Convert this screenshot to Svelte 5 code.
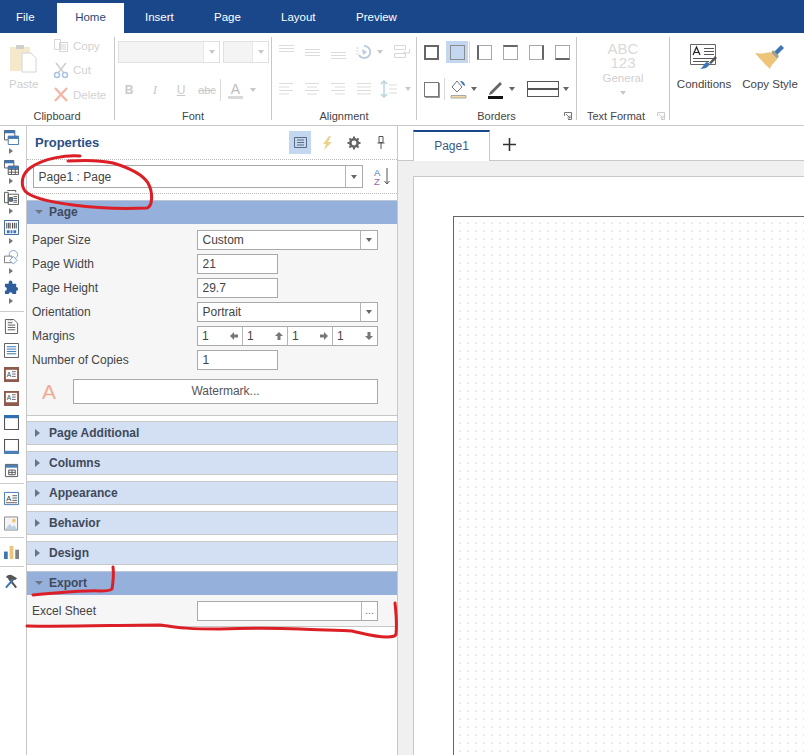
<script>
  const tabs = ['File', 'Home', 'Insert', 'Page', 'Layout', 'Preview'];
  const rows = [
    { label: 'Paper Size', kind: 'select', value: 'Custom' },
    { label: 'Page Width', kind: 'input', value: '21' },
    { label: 'Page Height', kind: 'input', value: '29.7' },
    { label: 'Orientation', kind: 'select', value: 'Portrait' },
    { label: 'Margins', kind: 'margins' },
    { label: 'Number of Copies', kind: 'input', value: '1' }
  ];
  const collapsed = ['Page Additional', 'Columns', 'Appearance', 'Behavior', 'Design'];
  const marginIcons = [
    'M0 4 4 0v2.500h4v3H4V8z',
    'M4 0l4 4H5.500v4h-3V4H0z',
    'M8 4 4 0v2.500H0v3h4V8z',
    'M4 8 0 4h2.500V0h3v4H8z'
  ];
  const alignTop = [
    'M0 6.500h15M0 9.500h15M0 12.500h15',
    'M0 10.500h15M0 13.500h15M0 16.500h15',
    'M0 13.500h15M0 16.500h15M0 19.500h15'
  ];
  const alignBottom = [
    'M1 1.500h14M1 5h10M1 8.500h14M1 12h10',
    'M1 1.500h14M3 5h10M1 8.500h14M3 12h10',
    'M1 1.500h14M5 5h10M1 8.500h14M5 12h10',
    'M1 1.500h14M1 5h14M1 8.500h14M1 12h14'
  ];
</script>

<div class="app">
  <header class="tabbar">
    {#each tabs as tab}
      <div class="tab" class:active={tab === 'Home'}>{tab}</div>
    {/each}
  </header>

  <section class="ribbon">
    <div class="group clipboard">
      <div class="group-body clip-body">
        <div class="big dis">
          <svg width="28" height="30" viewBox="0 0 28 30"><path d="M1 3h20v24H1z" fill="#f5e9cc"/><path d="M7 1h8v4H7z" fill="#cfcfcf"/><path d="M13 9h9l5 5v14H13z" fill="#fff" stroke="#d4d4d4"/></svg>
          <span>Paste</span>
        </div>
        <div class="smalls dis">
          <div class="small"><svg width="16" height="15" viewBox="0 0 16 15" fill="none" stroke="#d6d6d6"><path d="M1.500 1.500h6v10h-6zM6.500 4.500h8v9h-8zM8 7h5M8 9h5M8 11h5"/></svg><span>Copy</span></div>
          <div class="small"><svg width="16" height="17" viewBox="0 0 16 17" fill="none"><path d="M3 1l8 10M13 1 5 11" stroke="#cdcdcd" stroke-width="1.500"/><circle cx="4" cy="13" r="2.500" stroke="#a9c3e6" stroke-width="1.500"/><circle cx="12" cy="13" r="2.500" stroke="#a9c3e6" stroke-width="1.500"/></svg><span>Cut</span></div>
          <div class="small"><svg width="16" height="15" viewBox="0 0 16 15" fill="none"><path d="M2 1l12 13M14 1 2 14" stroke="#f3b5a6" stroke-width="2.200"/></svg><span>Delete</span></div>
        </div>
      </div>
      <div class="group-label">Clipboard</div>
    </div>

    <div class="group font">
      <div class="group-body font-body">
        <div class="combos">
          <div class="combo c1"><i></i><b class="drop"><em class="tri"></em></b></div>
          <div class="combo c2"><i></i><b class="drop"><em class="tri"></em></b></div>
        </div>
        <div class="font-btns">
          <span class="f fb">B</span><span class="f fi">I</span><span class="f fu">U</span><span class="f fs">abc</span>
          <span class="vsep"></span>
          <span class="fa">A</span><em class="tri"></em>
        </div>
      </div>
      <div class="group-label">Font</div>
    </div>

    <div class="group alignment">
      <div class="group-body align-rows">
        <div class="a-row">
          {#each alignTop as d}
            <span class="a-cell"><svg width="15" height="20" viewBox="0 0 15 20" stroke="#dcdcdc"><path {d}/></svg></span>
          {/each}
          <span class="rot low"><svg width="18" height="18" viewBox="0 0 18 18" fill="none"><path d="M9 3a6 6 0 1 1-5 9" stroke="#bccbdd" stroke-width="2"/><path d="M7 6l5 3-4 3z" fill="#bccbdd"/><path d="M1 5h3M1 8h3M1 11h3" stroke="#ddd"/></svg><em class="tri"></em></span>
          <svg class="wrap" width="16" height="16" viewBox="0 0 16 16" fill="none" stroke="#d8d8d8"><path d="M.5 1.500h11v4H.5zM.5 9.500h11v4H.5zM15.500 5v4h-6M11.500 7l-2 2 2 2"/></svg>
        </div>
        <div class="a-row">
          {#each alignBottom as d}
            <span class="a-cell"><svg width="16" height="14" viewBox="0 0 16 14" stroke="#dcdcdc"><path {d}/></svg></span>
          {/each}
          <span class="rot spacing"><svg width="18" height="18" viewBox="0 0 18 18" fill="none"><path d="M4 1v16" stroke="#b7d5e3" stroke-width="1.500"/><path d="M1 4l3-3 3 3M1 14l3 3 3-3" stroke="#b7d5e3" stroke-width="1.500"/><path d="M9 5h8M9 9h8M9 13h8" stroke="#dcdcdc"/></svg><em class="tri"></em></span>
        </div>
      </div>
      <div class="group-label">Alignment</div>
    </div>

    <div class="group borders">
      <div class="group-body borders-body">
        <div class="b-row r1">
          <span class="bb"><i class="box all"></i></span>
          <span class="bb on"><i class="box none"></i></span>
          <span class="vsep tall"></span>
          <span class="bb"><i class="box l"></i></span>
          <span class="bb"><i class="box t"></i></span>
          <span class="bb"><i class="box r"></i></span>
          <span class="bb"><i class="box bt"></i></span>
        </div>
        <div class="b-row r2">
          <span class="bb"><i class="box shadow"></i></span>
          <span class="vsep tall"></span>
          <svg class="fill" width="18" height="19" viewBox="0 0 18 19" fill="none"><path d="M7 1l5 6-5 5-5-5z" stroke="#777"/><path d="M10 1c3 0 5 2 5 5l-2-1z" fill="#3d77b8"/><path d="M1 15.500h15v2.500H1z" fill="#f0d9a3" stroke="#aaa"/></svg>
          <em class="tri dk"></em>
          <svg class="pen" width="18" height="19" viewBox="0 0 18 19" fill="none"><path d="M3 12 13 2l2 2L5 14l-3 1z" fill="#666"/><path d="M1 16h15v3H1z" fill="#111"/></svg>
          <em class="tri dk"></em>
          <span class="lines"></span>
          <em class="tri dk"></em>
        </div>
      </div>
      <div class="group-label">Borders</div>
      <svg class="launcher" width="8" height="8" viewBox="0 0 8 8" fill="none" stroke="#777"><path d="M.5 4V.5H7.500V7.500H4M2 2l4 4M3.500 6H6V3.500"/></svg>
    </div>

    <div class="group format">
      <div class="group-body fmt">
        <span class="abc">ABC</span>
        <span class="abc">123</span>
        <span class="gen">General</span>
        <em class="tri"></em>
      </div>
      <div class="group-label tight">Text Format</div>
      <svg class="launcher" width="8" height="8" viewBox="0 0 8 8" fill="none" stroke="#ccc"><path d="M.5 4V.5H7.500V7.500H4M2 2l4 4M3.500 6H6V3.500"/></svg>
    </div>

    <div class="tools">
      <div class="tool">
        <svg width="28" height="26" viewBox="0 0 28 26" fill="none"><path d="M.5.500h25v20H.5z" fill="#fff" stroke="#666"/><path d="M14 4.500h10M14 7.500h10M14 10.500h10M3 14.500h21M3 17.500h16" stroke="#555"/><path d="M3 11 6.500 3 10 11M4.500 8.500h4" stroke="#222" stroke-width="1.200"/><path d="M27 14 21 20l-2-1 6-7z" fill="#555"/><path d="M19 19c1 3-3 6-9 6 3-1 3-5 7-7z" fill="#3d77b8"/></svg>
        <span>Conditions</span>
      </div>
      <div class="tool">
        <svg width="32" height="26" viewBox="0 0 32 26"><path d="M27 1l3 3-7 7-3-3z" fill="#3d77b8"/><path d="M19 6l6 6-2 3-6-6z" fill="#a9a18c"/><path d="M1 9c6 1 12 0 15-1l7 7c-2 3-6 6-7 10C10 19 5 14 1 9z" fill="#eec37a"/></svg>
        <span>Copy Style</span>
      </div>
    </div>
  </section>

  <main class="body">
    <nav class="rail">
      <div class="tb"><svg viewBox="0 0 16 16"><path d="M.5.500h11v10H.5z" fill="#fff" stroke="#555"/><path d="M.5.500h11v3H.5z" fill="#3e76b4"/><path d="M4.500 6.500h11v9h-11z" fill="#fff" stroke="#3e76b4"/><path d="M4.500 6.500h11v3h-11z" fill="#3e76b4"/></svg></div><i class="ar"></i>
      <div class="tb"><svg viewBox="0 0 16 16" fill="none"><path d="M.5.500h10v8H.5z" fill="#fff" stroke="#555"/><path d="M.5.500h10v3H.5z" fill="#3e76b4"/><path d="M4.500 6.500h11v9h-11zM4.500 10h11M4.500 13h11M8 6.500v9M12 6.500v9" fill="#fff" stroke="#555"/><path d="M4.500 6.500h11v3h-11z" fill="#3e76b4"/></svg></div><i class="ar"></i>
      <div class="tb"><svg viewBox="0 0 16 16" fill="none" stroke="#555"><path d="M.5 2.500h4v11h-4zM3.500.500h9v2M4.500 4.500h11v11h-11zM10 7h4M10 9h4M10 11h4M10 13h4"/><path d="M6 8h3v4H6z" fill="#3e76b4"/></svg></div><i class="ar"></i>
      <div class="tb"><svg viewBox="0 0 16 16" fill="none"><path d="M.5.500h15v15H.5z" stroke="#2f5f97"/><path d="M3 3v6M5 3v6M6.500 3v6M9 3v6M11 3v6M13 3v6" stroke="#333"/><path d="M3 11h3v3H3zM7 11h2v3H7zM10 11h3v3h-3z" fill="#3e76b4"/></svg></div><i class="ar"></i>
      <div class="tb"><svg viewBox="0 0 16 16" fill="none"><circle cx="10" cy="5" r="4.500" stroke="#7fa3cc"/><path d="M.5 6.500h8v7h-8z" fill="#fff" stroke="#777"/><path d="M10 7l4 4-4 4-4-4z" fill="#fff" stroke="#7fa3cc"/></svg></div><i class="ar"></i>
      <div class="tb"><svg viewBox="0 0 16 16"><path d="M1 4h4V2.500a2 2 0 0 1 4 0V4h4v3.500a2 2 0 0 1 0 4V15H9a2 2 0 0 0-4 0H1v-3.500a2 2 0 0 0 0-4z" fill="#2e5f9c"/></svg></div><i class="ar"></i>
      <hr class="first" />
      <div class="tc"><svg viewBox="0 0 16 16" fill="none" stroke="#555"><path d="M1.500.500h9l4 4v11h-13zM4 4h5M4 6.500h8M4 9h8M4 11.500h8"/><path d="M4 2h6" stroke="#999" stroke-dasharray="1 1"/></svg></div>
      <div class="tc"><svg viewBox="0 0 16 16" fill="none"><path d="M.5.500h15v15H.5z" stroke="#555"/><path d="M3 4h10M3 6.500h10M3 9h10M3 11.500h10" stroke="#2f6eaf"/></svg></div>
      <div class="tc"><svg viewBox="0 0 16 16"><path d="M0 0h16v16H0z" fill="#8d5a4b"/><path d="M2 3h12v10H2z" fill="#fff"/><path d="M8.500 5h4M8.500 7.500h4M8.500 10h4" stroke="#666"/><text x="3" y="11" font-size="7" fill="#444" font-family="Liberation Sans">A</text></svg></div>
      <div class="tc"><svg viewBox="0 0 16 16"><path d="M0 0h16v16H0z" fill="#8d5a4b"/><path d="M2 2h12v10H2z" fill="#fff"/><path d="M8.500 4h4M8.500 6.500h4M8.500 9h4" stroke="#666"/><text x="3" y="10" font-size="7" fill="#444" font-family="Liberation Sans">A</text></svg></div>
      <div class="tc"><svg viewBox="0 0 14 14"><path d="M.5.500h13v13H.5z" fill="#fff" stroke="#555"/><path d="M0 0h14v3H0z" fill="#2f6eaf"/></svg></div>
      <div class="tc"><svg viewBox="0 0 14 14"><path d="M.5.500h13v13H.5z" fill="#fff" stroke="#555"/><path d="M0 11h14v3H0z" fill="#4b7fb7"/></svg></div>
      <div class="tc"><svg viewBox="0 0 14 16" fill="none"><path d="M.5 1.500h13v13H.5z" fill="#fff" stroke="#555"/><path d="M1 2h13v3H1z" fill="#4b7fb7"/><path d="M4 7.500h7v5H4zM4 10h7M7.500 7.500v5" stroke="#555"/></svg></div>
      <hr />
      <div class="td"><svg viewBox="0 0 16 14"><path d="M.5.500h15v13H.5z" fill="#fff" stroke="#3e76b4"/><path d="M9 4h5M9 6.500h5M9 9h5M2 11.500h12" stroke="#555"/><text x="2.500" y="9.500" font-size="8" fill="#333" font-family="Liberation Sans">A</text></svg></div>
      <div class="td"><svg viewBox="0 0 16 15"><path d="M.5.500h14v14H.5z" fill="#f4f4f4" stroke="#888"/><circle cx="10.500" cy="4.500" r="2" fill="#eec37a"/><path d="M1 14l5-6 3 3 2-2 3 5z" fill="#bcd0e6"/></svg></div>
      <hr />
      <div class="td"><svg viewBox="0 0 16 14"><path d="M0 6h4v8H0z" fill="#3e76b4"/><path d="M6 0h4v14H6z" fill="#eec37a"/><path d="M12 4h4v10h-4z" fill="#808080"/></svg></div>
      <hr />
      <div class="td"><svg viewBox="0 0 16 15" fill="none"><path d="M13 14 5 4" stroke="#555" stroke-width="2.200"/><path d="M2 14l9-10" stroke="#3e76b4" stroke-width="2.200"/><path d="M2 3c2-3 5-3 7-2l5 3-2 2-2-1-2 1z" fill="#555"/></svg></div>
    </nav>

    <aside class="panel">
      <div class="p-head">
        <h2>Properties</h2>
        <div class="p-icons">
          <span class="pi on"><svg width="13" height="11" viewBox="0 0 13 11" fill="none" stroke="#5a6b80"><path d="M.5.500h12v10H.5zM3 3h7M3 5.500h7M3 8h7"/></svg></span>
          <span class="pi"><svg width="11" height="14" viewBox="0 0 11 14"><path d="M7 0 1 8h3l-2 6 8-8H6l3-6z" fill="#eed18c"/></svg></span>
          <span class="pi"><svg width="14" height="14" viewBox="0 0 14 14" fill="none"><circle cx="7" cy="7" r="3.700" stroke="#666" stroke-width="2.600"/><path d="M7 .5v13M.5 7h13M2.400 2.400l9.200 9.200M11.600 2.400l-9.200 9.200" stroke="#666" stroke-width="2" stroke-dasharray="2.200 8.600"/></svg></span>
          <span class="pi"><svg width="8" height="13" viewBox="0 0 8 13" fill="none" stroke="#555"><path d="M2 .5h4v6H2zM.5 7h7M4 7v6"/></svg></span>
        </div>
      </div>
      <div class="p-select">
        <div class="field sel"><span>Page1 : Page</span><b class="drop"><em class="tri dk"></em></b></div>
        <div class="sort">
          <span class="az"><i>A</i><i>Z</i></span>
          <svg width="6" height="17" viewBox="0 0 6 17" fill="none"><path d="M3 0v16M.5 13l2.500 3 2.500-3" stroke="#555"/></svg>
        </div>
      </div>

      <div class="sec-head open first"><em class="caret down"></em>Page</div>
      <div class="sec-body">
        {#each rows as row}
          <div class="row">
            <label>{row.label}</label>
            {#if row.kind === 'select'}
              <div class="field wide"><span>{row.value}</span><b class="drop"><em class="tri dk"></em></b></div>
            {:else if row.kind === 'input'}
              <div class="field narrow"><span>{row.value}</span></div>
            {:else}
              <div class="field wide marg">
                {#each marginIcons as d}
                  <div class="m"><span>1</span><svg width="8" height="8" viewBox="0 0 8 8"><path {d} fill="#777"/></svg></div>
                {/each}
              </div>
            {/if}
          </div>
        {/each}
        <div class="wm">
          <span class="bigA">A</span>
          <div class="wm-btn">Watermark...</div>
        </div>
      </div>

      {#each collapsed as name}
        <div class="sec-head"><em class="caret"></em>{name}</div>
      {/each}

      <div class="sec-head open"><em class="caret down"></em>Export</div>
      <div class="sec-body export">
        <div class="row">
          <label>Excel Sheet</label>
          <div class="field wide"><span></span><b class="drop dots">...</b></div>
        </div>
      </div>
    </aside>

    <section class="designer">
      <div class="d-tabs">
        <div class="d-tab">Page1</div>
        <svg class="plus" width="13" height="13" viewBox="0 0 13 13"><path d="M6.500 0v13M0 6.500h13" stroke="#333" stroke-width="1.600"/></svg>
      </div>
      <div class="d-area">
        <div class="sheet"><div class="printable"></div></div>
      </div>
    </section>
  </main>

  <svg class="ink" width="804" height="755" viewBox="0 0 804 755" fill="none" stroke="#dc1f26" stroke-width="3" stroke-linecap="round" stroke-linejoin="round">
    <path d="M80 156C66 155 44 158 30 168C22 174 20 184 25 191C31 198 50 202 73 205C95 208 125 209 147 208C153 206 153 192 148 183C143 175 133 169 113 163C100 160 84 160 68 161"/>
    <path d="M113 567C114 575 113 583 112 589C110 591 106 591 100 591C85 590 70 592 33 595"/>
    <path d="M27 626C70 627 120 625 160 625C180 628 190 629 220 629C250 628 275 628 300 629C320 630 340 630 352 631C365 634 375 637 387 637C392 637 396 636 396 634C397 625 396 612 395 603"/>
  </svg>
</div>

<style>
  :global(body) { margin: 0; background: #fff; }
  .app {
    position: relative; width: 804px; height: 755px; overflow: hidden;
    font-family: "Liberation Sans", Arial, sans-serif; font-size: 12px; color: #444;
    display: flex; flex-direction: column; background: #fff;
  }
  .tabbar { height: 33px; background: #19478a; display: flex; align-items: flex-end; flex: none; }
  .tab { color: #fff; height: 30px; line-height: 29px; font-size: 11.500px; box-sizing: border-box; flex: none; }
  .tab:nth-child(1) { width: 57px; padding-left: 16px; }
  .tab:nth-child(2) { width: 67px; text-align: center; }
  .tab:nth-child(3) { width: 90px; padding-left: 21px; }
  .tab:nth-child(4) { width: 67px; }
  .tab:nth-child(5) { width: 75px; }
  .tab.active { background: #fff; color: #2a4a78; }

  .ribbon { height: 92px; display: flex; flex: none; border-bottom: 1px solid #c8c8c8; box-sizing: content-box; }
  .group { position: relative; display: flex; flex-direction: column; border-right: 1px solid #c8c8c8; margin: 4px 0 5px; box-sizing: border-box; height: 83px; flex: none; }
  .group-body { flex: none; height: 72px; position: relative; }
  .group-label { height: 14px; line-height: 14px; text-align: center; color: #444; flex: none; font-size: 11px; }
  .group-label.tight { padding-right: 14px; }
  .clipboard { width: 115px; }
  .font { width: 157px; }
  .alignment { width: 145px; }
  .borders { width: 160px; }
  .format { width: 93px; }
  .launcher { position: absolute; right: 4px; bottom: 0; }
  .clip-body { display: flex; padding-left: 9px; color: #ccc; box-sizing: border-box; font-size: 11.500px; }
  .big { width: 44px; display: flex; flex-direction: column; align-items: flex-start; gap: 4px; padding-top: 7px; }
  .big span { color: #cfcfcf; }
  .smalls { display: flex; flex-direction: column; gap: 7.500px; }
  .small { display: flex; align-items: center; gap: 4px; height: 17px; color: #d2d2d2; }
  .small svg { width: 16px; }

  .tri { display: inline-block; width: 0; height: 0; border: 3px solid transparent; border-top: 4px solid #c8c8c8; border-bottom: 0; flex: none; }
  .tri.dk { border-top-color: #666; }
  .font-body { padding: 4px 0 0 3px; box-sizing: border-box; }
  .combos { display: flex; gap: 3px; }
  .combo { height: 22px; border: 1px solid #e0e0e0; display: flex; box-sizing: border-box; }
  .combo i { flex: 1; background: #f4f4f4; }
  .c1 { width: 102px; }
  .c2 { width: 46px; }
  .combo .drop { width: 15px; border-left: 1px solid #e8e8e8; display: flex; align-items: center; justify-content: center; }
  .font-btns { display: flex; align-items: center; height: 24px; margin-top: 15px; position: relative; color: #ccc; }
  .f { width: 26px; text-align: center; color: #cacaca; font-size: 12px; }
  .fb { font-weight: bold; margin-left: -2px; }
  .fi { font-style: italic; font-family: "Liberation Serif", serif; font-size: 13px; }
  .fu { text-decoration: underline; }
  .fs { text-decoration: line-through; font-size: 11px; }
  .vsep { width: 1px; height: 22px; background: #d8d8d8; flex: none; }
  .fa { margin-left: 7px; margin-right: 7px; border-bottom: 3px solid #d9d9d9; font-size: 14px; color: #bdbdbd; width: 15px; text-align: center; line-height: 14px; }

  .align-rows { display: flex; flex-direction: column; gap: 20px; padding: 2px 0 0 1px; box-sizing: border-box; }
  .a-row { display: flex; align-items: center; height: 20px; }
  .a-cell { width: 26px; display: flex; justify-content: center; flex: none; }
  .rot { display: flex; align-items: center; gap: 4px; width: 36px; padding-left: 4px; box-sizing: border-box; flex: none; }
  .rot.low { margin-top: 6px; }
  .rot.spacing { gap: 7px; width: auto; padding-left: 3px; }
  .wrap { margin: 6px 0 0 7px; flex: none; }

  .borders-body { padding-top: 4px; box-sizing: border-box; }
  .b-row { display: flex; align-items: center; height: 22px; }
  .r1 { padding-left: 3px; }
  .r2 { margin-top: 15px; padding-left: 3px; }
  .bb { width: 22px; height: 22px; display: flex; align-items: center; justify-content: center; margin-right: 4px; flex: none; }
  .r1 .bb.on { margin-right: 1px; background: #c4d7f0; }
  .r1 .vsep { margin-right: 3px; }
  .box { display: block; width: 13px; height: 13px; border: 1px solid #a8a8a8; }
  .box.all { border: 2px solid #666; width: 11px; height: 11px; }
  .box.none { border-color: #8c8c8c; }
  .box.l { border-left: 2px solid #666; width: 12px; }
  .box.t { border-top: 2px solid #666; height: 12px; }
  .box.r { border-right: 2px solid #666; width: 12px; }
  .box.bt { border-bottom: 2px solid #666; height: 12px; }
  .box.shadow { border-color: #777; box-shadow: 1px 1px 0 #999; }
  .r2 .bb { margin-right: 2px; }
  .r2 .vsep { height: 22px; margin-right: 5px; }
  .fill { margin-right: 3px; }
  .pen { margin: 0 4px 0 10px; }
  .lines { width: 30px; height: 14px; margin: 0 4px 0 12px; border: 1px solid #555; background: linear-gradient(#fff 6px, #555 6px, #555 8px, #fff 8px); flex: none; }

  .fmt { display: flex; flex-direction: column; align-items: center; padding-top: 3px; box-sizing: border-box; color: #d9d9d9; }
  .abc { font-size: 15px; line-height: 17px; height: 14px; color: #d9d9d9; }
  .gen { margin-top: 3px; line-height: 14px; font-size: 11.500px; color: #d0d0d0; }
  .fmt .tri { margin-top: 6px; }

  .tools { display: flex; padding-top: 11px; }
  .tool { display: flex; flex-direction: column; align-items: center; gap: 8px; width: 68px; color: #444; font-size: 11.500px; }
  .tool:last-child { width: 64px; }

  .body { flex: 1; display: flex; min-height: 0; }
  .rail { width: 22px; padding-right: 4px; flex: none; border-right: 1px solid #c8c8c8; display: flex; flex-direction: column; align-items: center; padding-top: 3px; box-sizing: content-box; }
  .rail svg { width: 15px; height: 15px; display: block; }
  .tb { height: 17px; flex: none; display: flex; align-items: center; justify-content: center; }
  .ar { display: block; width: 0; height: 0; border: 3px solid transparent; border-left: 4px solid #777; border-right: 0; margin: 2px 0 5px; flex: none; }
  .rail hr { width: 24px; border: 0; border-top: 1px solid #ccc; margin: 1px 0 2px 2px; flex: none; }
  .rail hr.first { margin-top: 2px; }
  .tc { height: 24px; display: flex; align-items: center; justify-content: center; flex: none; }
  .td { height: 25px; display: flex; align-items: center; justify-content: center; flex: none; }

  .panel { width: 370px; flex: none; border-right: 1px solid #c8c8c8; display: flex; flex-direction: column; }
  .p-head { height: 34px; display: flex; align-items: center; justify-content: space-between; padding: 0 5px 0 8px; border-bottom: 1px dotted #bbb; box-sizing: border-box; flex: none; }
  h2 { margin: 0; font-weight: bold; color: #2c4f85; font-size: 13px; }
  .p-icons { display: flex; align-items: center; gap: 5px; }
  .pi { width: 22px; height: 23px; display: flex; align-items: center; justify-content: center; }
  .pi.on { background: #c4d7f0; }
  .p-select { height: 34px; display: flex; align-items: center; padding-left: 6px; border-bottom: 1px dotted #bbb; box-sizing: border-box; flex: none; gap: 11px; }
  .field { display: flex; align-items: center; height: 20px; background: #fff; border: 1px solid #a9a9a9; box-sizing: border-box; }
  .field > span { flex: 1; padding-left: 4.500px; color: #444; }
  .field .drop { width: 16px; height: 100%; border-left: 1px solid #b5b5b5; display: flex; align-items: center; justify-content: center; font-weight: normal; }
  .sel { width: 330px; height: 23px; }
  .sort { flex: none; display: flex; align-items: center; gap: 3px; }
  .az { display: flex; flex-direction: column; width: 7px; font-size: 9.500px; line-height: 9px; }
  .az i { font-style: normal; color: #4a78b5; height: 9px; }
  .az i + i { color: #8a6aa3; }
  .sec-head { height: 24px; margin-bottom: 6px; flex: none; box-sizing: border-box; background: #d3dff2; border-top: 1px solid #c8c8c8; border-bottom: 1px solid #c8c8c8; font-weight: bold; color: #3f4a5c; display: flex; align-items: center; line-height: 1; padding-left: 8px; }
  .sec-head.open { background: #95b0da; margin-bottom: 0; border-bottom: 0; border-top-color: #bcc6d6; padding-bottom: 2px; }
  .sec-head.first { margin-top: 6px; }
  .caret { display: block; width: 14px; height: 8px; position: relative; }
  .caret::before { content: ""; position: absolute; left: 0; top: 0; border: 4px solid transparent; border-left: 5px solid #6b7480; border-right: 0; }
  .caret.down::before { border: 4px solid transparent; border-top: 4px solid #6b7480; border-bottom: 0; top: 2px; }
  .sec-body { background: #f6f6f6; padding: 4px 0 0 5px; flex: none; border-bottom: 1px solid #c8c8c8; margin-bottom: 5px; height: 192px; box-sizing: border-box; }
  .sec-body.export { height: 32px; margin: 0; }
  .row { display: flex; align-items: center; height: 24px; }
  .row label { width: 165px; flex: none; color: #444; }
  .wide { width: 181px; }
  .narrow { width: 81px; }
  .marg { align-items: stretch; }
  .m { flex: 1; display: flex; align-items: center; justify-content: space-between; padding: 0 4px 0 4px; border-right: 1px solid #b5b5b5; }
  .m:last-child { border-right: 0; }
  .wm { display: flex; align-items: center; padding: 7px 0 0 10px; }
  .bigA { color: #f0ab92; font-size: 21px; width: 31px; line-height: 25px; }
  .wm-btn { width: 305px; height: 25px; box-sizing: border-box; border: 1px solid #a9a9a9; background: #fff; text-align: center; line-height: 23px; color: #555; }
  .dots { color: #777; font-size: 11px; line-height: 1; padding-bottom: 2px; box-sizing: border-box; }

  .designer { flex: 1; display: flex; flex-direction: column; min-width: 0; background: #f0f0f0; }
  .d-tabs { height: 35px; background: #fff; border-bottom: 1px solid #c8c8c8; flex: none; display: flex; align-items: flex-end; padding-left: 15px; box-sizing: border-box; }
  .d-tab { width: 77px; height: 31px; box-sizing: border-box; border: 1px solid #c8c8c8; border-top: 2px solid #19478a; border-bottom: 0; background: #fff; margin-bottom: -1px; text-align: center; line-height: 28px; color: #3c5a85; }
  .plus { margin: 0 0 9px 13px; }
  .d-area { flex: 1; padding: 15px 0 0 15px; overflow: hidden; }
  .sheet { width: 500px; height: 700px; background: #fff; border: 1px solid #c8c8c8; padding: 39px; box-sizing: border-box; }
  .printable { width: 400px; height: 600px; border: 1px solid #666; background-color: #fff; background-image: radial-gradient(circle, #ebebeb 0.8px, transparent 1px); background-size: 8px 8px; background-position: 2px 2px; }

  .ink { position: absolute; left: 0; top: 0; pointer-events: none; }
</style>
